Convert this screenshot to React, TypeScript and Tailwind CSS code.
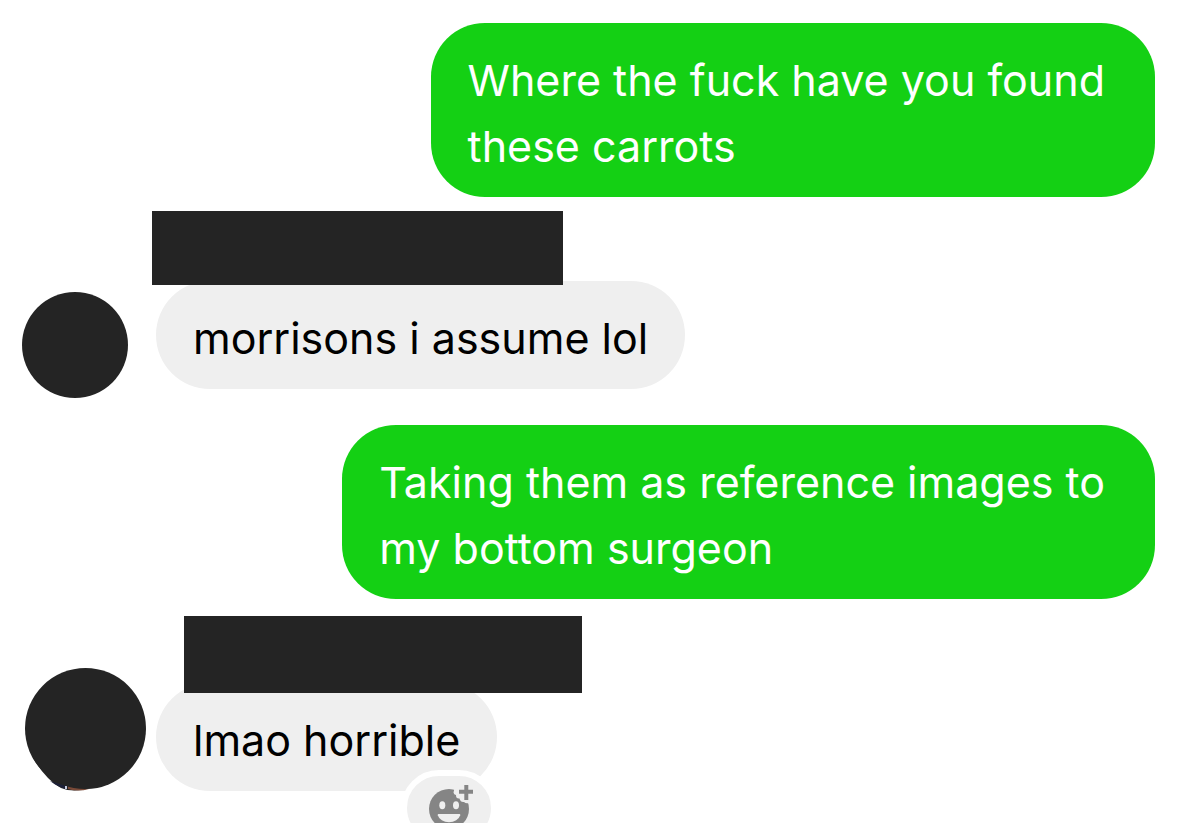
interface BubbleProps {
  text: string;
  sent?: boolean;
}

function Bubble({ text, sent = false }: BubbleProps) {
  return (
    <p
      className={
        sent
          ? 'rounded-[54px] bg-[#14d014] pl-[37px] pr-[50px] pt-[24px] pb-[18px] text-[43px] leading-[66px] text-white whitespace-pre-line'
          : 'w-fit rounded-[54px] bg-[#efefef] px-[37px] pt-[24px] pb-[18px] text-[43px] leading-[66px] text-black'
      }
    >
      {text}
    </p>
  );
}

function ReactionIcon() {
  return (
    <svg viewBox="0 0 48 48" className="size-[48px] shrink-0" aria-hidden="true">
      <circle cx="24" cy="25" r="20" fill="#858585" />
      <path
        d="M31 2Q28.500 5.500 28.500 8.500Q28.800 10.500 31 11Q30.800 14.800 34.500 14.500Q35.500 18.500 39 18Q41 20 44 19L48 12V2Z"
        fill="#efefef"
      />
      <ellipse cx="17.300" cy="21.300" rx="3" ry="4" fill="#efefef" />
      <ellipse cx="31" cy="21.300" rx="3" ry="4" fill="#efefef" />
      <path d="M13.500 30h21q1 0 .7 1.200a11.500 9 0 0 1-22.400 0Q12.500 30 13.500 30Z" fill="#efefef" />
      <path d="M41.300 1v15M34 7.700h14" stroke="#858585" strokeWidth="4" />
    </svg>
  );
}

// the photo peeks out a little under the cover at the lower left
function CoveredAvatar() {
  return (
    <svg viewBox="0 0 121 123" className="mt-[52px] h-[123px] w-[121px] shrink-0" aria-hidden="true">
      <path d="M8 90Q22 113 36 120Q48 125 66 120L60 90Z" fill="#242424" />
      <path d="M25 113Q33 119 41 121L41 118Z" fill="#1c2038" />
      <path d="M43 121Q53 124 64 121L43 118Z" fill="#7a4a38" />
      <path d="M40 118h2v3h-2Z" fill="#c5cbe0" />
      <circle cx="60.500" cy="60.500" r="60.500" fill="#242424" />
    </svg>
  );
}

export default function App() {
  return (
    <main className="h-screen overflow-hidden bg-white pr-[24px] pt-[23px] font-['Inter',sans-serif]">
      <div className="flex justify-end">
        <Bubble sent text={'Where the fuck have you found\nthese carrots'} />
      </div>

      <div className="mt-[14px] flex items-start gap-[24px] pl-[22px]">
        <div className="mt-[81px] size-[106px] shrink-0 rounded-full bg-[#242424]" />
        <div>
          <div className="relative h-[74px] w-[411px] bg-[#242424]" />
          <div className="-mt-[4px] ml-[4px]">
            <Bubble text="morrisons i assume lol" />
          </div>
        </div>
      </div>

      <div className="mt-[27px] flex justify-end">
        <Bubble sent text={'Taking them as reference images to\nmy bottom surgeon'} />
      </div>

      <div className="mt-[17px] flex items-start gap-[10px] pl-[25px]">
        <CoveredAvatar />
        <div>
          <div className="relative z-10 ml-[28px] h-[77px] w-[398px] bg-[#242424]" />
          <div className="relative -mt-[10px] w-fit">
            <Bubble text="lmao horrible" />
            <button
              type="button"
              aria-label="Add reaction"
              className="absolute right-0 top-[87px] flex h-[76px] w-[96px] justify-center rounded-full border-[6px] border-white bg-[#efefef] pt-[8px]"
            >
              <ReactionIcon />
            </button>
          </div>
        </div>
      </div>
    </main>
  );
}
